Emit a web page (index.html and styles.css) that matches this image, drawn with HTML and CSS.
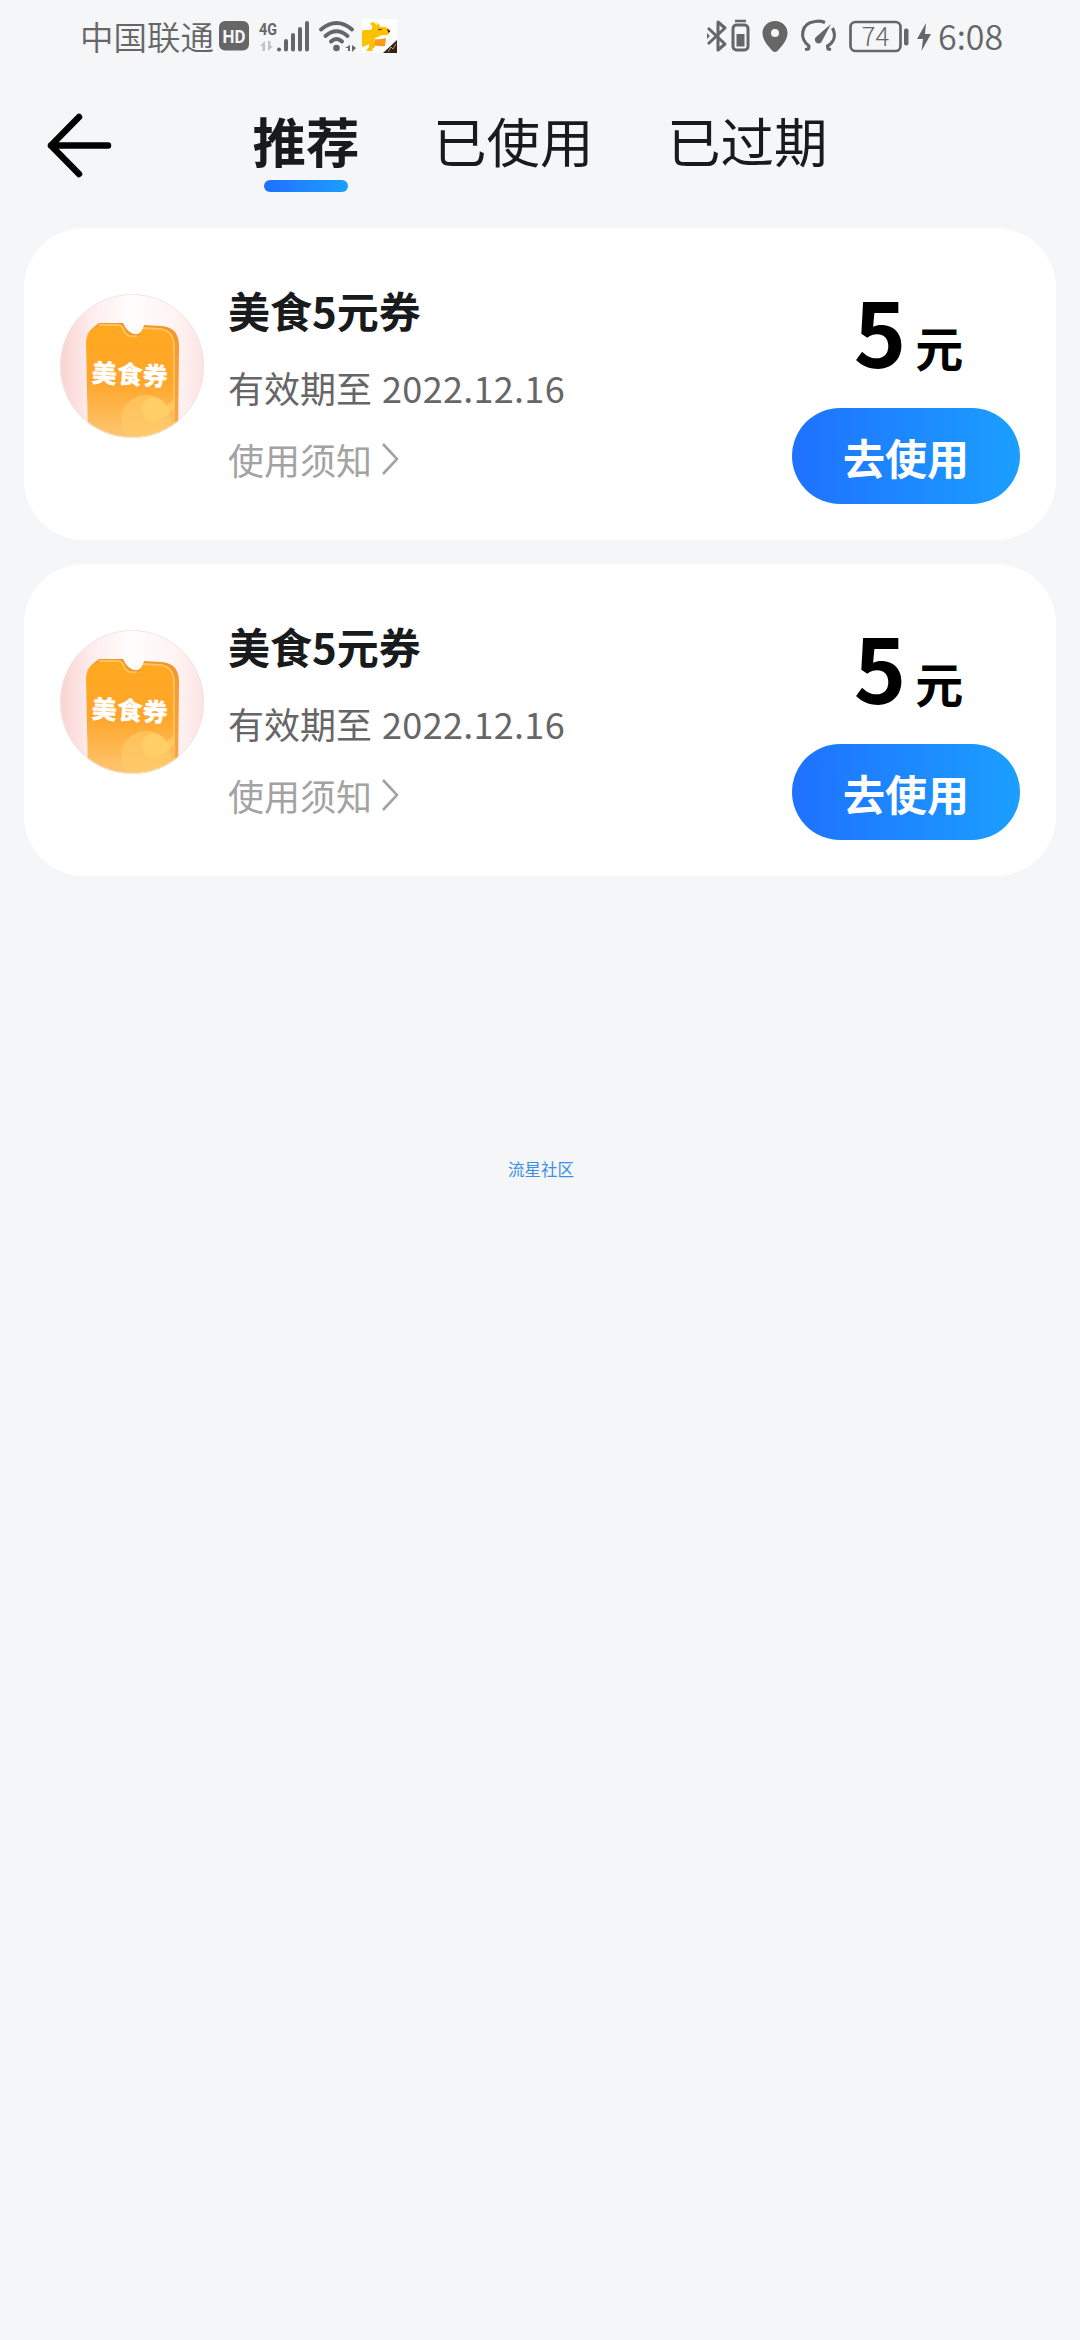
FILE: index.html
```html
<!DOCTYPE html>
<html lang="zh-CN">
<head>
<meta charset="utf-8">
<title>推荐</title>
<link rel="stylesheet" href="styles.css">
</head>
<body>
<svg class="defs" width="0" height="0" aria-hidden="true">
  <defs>
    <linearGradient id="halo" x1="0" y1="0" x2="1" y2="0">
      <stop offset="0" stop-color="#f8d3d1"/><stop offset=".22" stop-color="#fdeeed"/><stop offset=".5" stop-color="#fffdfc"/><stop offset=".82" stop-color="#fff3f2"/><stop offset="1" stop-color="#fbe3e2"/>
    </linearGradient>
    <linearGradient id="ticket" x1="0" y1="0" x2="0" y2="1">
      <stop offset="0" stop-color="#ffa820"/><stop offset=".5" stop-color="#ffa62b"/><stop offset="1" stop-color="#ffc673"/>
    </linearGradient>
    <linearGradient id="edge" x1="0" y1="0" x2="0" y2="1">
      <stop offset="0" stop-color="#f7952a"/><stop offset="1" stop-color="#fca548"/>
    </linearGradient>
    <clipPath id="round"><circle cx="72" cy="72" r="72"/></clipPath>
    <symbol id="coupon" viewBox="0 0 144 144">
      <g clip-path="url(#round)">
        <rect width="144" height="144" fill="url(#halo)"/>
        <path d="M28 45Q28 36 39 29L63 29Q68 40 76 40Q82 40 84 31L101 32Q119 33 119 52L118 144H75Z" fill="url(#edge)"/>
        <path d="M26 48Q27 32 42 32L58 32Q62 32 64 38Q68 44 77 43Q82 40 83 34L98 35Q113 36 113 53L114 144H28Z" fill="url(#ticket)"/>
        <path d="M39 31H58Q62 31 64 37Q68 44 77 42M83 34L99 35Q114 36 114 53V140" fill="none" stroke="#ffc55d" stroke-width="1.8"/>
        <path d="M64 27H84Q83 40 75 40Q68 39 64 27Z" fill="#fffdfc"/>
        <circle cx="86" cy="126" r="25" fill="#ffcd68" opacity=".65"/>
        <circle cx="94" cy="115" r="12" fill="#ffd36b" opacity=".7"/>
        <path d="M104 112Q113 109 114 103V114L104 124Z" fill="#ffd36b" opacity=".7"/>
        <text class="coupon-label" x="0" y="0" transform="translate(31 88) rotate(3)">美食券</text>
      </g>
      <circle cx="72" cy="72" r="71.5" fill="none" stroke="#f0e6e6"/>
    </symbol>
  </defs>
</svg>

<div class="status">
  <div class="status-left">
    <span class="carrier">中国联通</span>
    <svg class="hd" width="30" height="30" viewBox="0 0 30 30"><rect width="30" height="29.500" rx="6" fill="#666"/><text class="hd-text" x="15" y="21.500" text-anchor="middle" textLength="23" lengthAdjust="spacingAndGlyphs">HD</text></svg>
    <svg class="signal" width="51" height="32" viewBox="0 0 51 32">
      <text class="net" x="0" y="13.500" textLength="18" lengthAdjust="spacingAndGlyphs">4G</text>
      <path d="M6 20V30H3.500V25H1Z M9 20H11.500V25H14L9 30Z" fill="#c2c3c5"/>
      <g stroke="#666" stroke-width="4" stroke-linecap="round"><path d="M20 28.500v0M27 20v8.500M34 14v14.500M41 8v20.500M48 2v26.500"/></g>
    </svg>
    <svg class="wifi" width="38" height="32" viewBox="0 0 38 32">
      <g fill="none" stroke="#666" stroke-width="4" stroke-linecap="round"><path d="M2 8.500Q17.500-4.500 33 8.500M6.500 15Q17.500 5.500 28.500 15M12 20.500Q17.500 15.500 23 20.500"/></g>
      <circle cx="17.500" cy="27" r="3.300" fill="#666"/>
      <path d="M31 24V30H29V27H26Z M33 24L37 27L33 31Z" fill="#666"/>
    </svg>
    <svg class="app" width="35" height="34" viewBox="0 0 35 34">
      <rect width="35" height="34" fill="#fff"/>
      <path d="M0 12L2 11H8Q11 10 10 7L8 5L10 3Q13 3 15 7V4Q18 5 18 8Q24 7 28 11L27 15Q24 17 20 16Q16 18 13 19L12 22L14 25L12 29L10 30L11 32H4L7 28V25Q4 27 0 28Z" fill="#fdc100"/>
      <path d="M13 20Q18 21 24 19L23 27Q18 28 12 26Z" fill="#fb9b18"/>
      <path d="M25 10L28.500 12L26.500 14Z" fill="#2c2008"/><path d="M16 10.500h4" stroke="#6e5010" stroke-width="1.200"/>
      <path d="M35 21V34H21Z" fill="#32221a"/><path d="M26 33L29 28L31 30L34 25" stroke="#bd9176" fill="none"/>
    </svg>
  </div>
  <div class="status-right">
    <svg width="44" height="34" viewBox="0 0 44 34">
      <path d="M2 9L19 25L12 31V3L19 9L2 25" fill="none" stroke="#666" stroke-width="3" stroke-linejoin="round"/><path d="M1 14L4 17L1 20Z" fill="#666"/>
      <rect x="27" y="6" width="15" height="25" rx="3.500" fill="none" stroke="#666" stroke-width="3"/><path d="M29 2H40" stroke="#666" stroke-width="2.500"/><rect x="30.500" y="15" width="8" height="12.500" fill="#666"/>
    </svg>
    <svg class="pin" width="26" height="34" viewBox="0 0 26 34"><path fill-rule="evenodd" d="M13 2C6 2 .500 7 .500 14C.500 21 6 27 10.500 32Q13 34 15.500 32C20 27 25.500 21 25.500 14C25.500 7 20 2 13 2ZM13 10A4 4 0 1 1 13 18A4 4 0 1 1 13 10Z" fill="#666"/></svg>
    <svg class="gauge" width="37" height="34" viewBox="0 0 37 34">
      <path d="M5 30.500L8.500 30L9 27C-1 20 .500 4 15 2.500Q20 1.500 25 3.500M32.500 9C36 16 34.500 23 27.500 27L28 30L31 30.500" fill="none" stroke="#666" stroke-width="3.200" stroke-linejoin="round"/>
      <path d="M31 5L22 22A3.700 3.700 0 1 1 16 18Z" fill="#666"/>
    </svg>
    <svg class="battery" width="60" height="34" viewBox="0 0 60 34"><rect x="1.500" y="3" width="50" height="29" rx="5" fill="none" stroke="#666" stroke-width="2.700"/><rect x="55" y="9.500" width="4.500" height="17" rx="2" fill="#666"/><text class="level" x="26.500" y="27" text-anchor="middle">74</text></svg>
    <svg class="bolt" width="16" height="34" viewBox="0 0 16 34"><path d="M10 4L1 20H7L5.500 32L15 15H9Z" fill="#666"/></svg>
    <span class="clock">6:08</span>
  </div>
</div>

<nav class="header">
  <svg class="back" width="64" height="66" viewBox="0 0 64 66"><path d="M31 5L3 33.500L31 62M3 33.500H60" fill="none" stroke="#000" stroke-width="6.500" stroke-linecap="round" stroke-linejoin="round"/></svg>
  <div class="tabs">
    <span class="tab active">推荐</span>
    <span class="tab">已使用</span>
    <span class="tab">已过期</span>
  </div>
</nav>

<main class="list">
  <section class="card">
    <svg class="avatar" width="144" height="144"><use href="#coupon"/></svg>
    <div class="info">
      <div class="title">美食5元券</div>
      <div class="date">有效期至 <span class="digits">2022.12.16</span></div>
      <div class="notes">使用须知<svg width="18" height="32" viewBox="0 0 18 32"><path d="M2 1L16 16L2 31" fill="none" stroke="#a3a3a3" stroke-width="2.600"/></svg></div>
    </div>
    <div class="side">
      <div class="price"><span class="amount">5</span><span class="unit">元</span></div>
      <div class="button">去使用</div>
    </div>
  </section>
  <section class="card">
    <svg class="avatar" width="144" height="144"><use href="#coupon"/></svg>
    <div class="info">
      <div class="title">美食5元券</div>
      <div class="date">有效期至 <span class="digits">2022.12.16</span></div>
      <div class="notes">使用须知<svg width="18" height="32" viewBox="0 0 18 32"><path d="M2 1L16 16L2 31" fill="none" stroke="#a3a3a3" stroke-width="2.600"/></svg></div>
    </div>
    <div class="side">
      <div class="price"><span class="amount">5</span><span class="unit">元</span></div>
      <div class="button">去使用</div>
    </div>
  </section>
</main>
<footer class="community">流星社区</footer>
</body>
</html>
```

FILE: styles.css
```css
* { box-sizing: border-box; }
body {
  margin: 0;
  min-height: 2340px;
  background: #f4f6f8;
  font-family: "Noto Sans CJK SC", sans-serif;
  color: #181a1c;
}
svg { display: block; flex: none; overflow: visible; }
.defs { position: absolute; }

.status {
  display: flex;
  justify-content: space-between;
  height: 72px;
  padding: 0 76px 0 80px;
  color: #666;
}
.status-left, .status-right { display: flex; align-items: flex-start; }
.carrier { width: 134px; font-size: 33.5px; line-height: 71px; font-weight: 350; white-space: nowrap; }
.hd { margin: 21px 0 0 5px; }
.signal { margin: 21px 0 0 10px; }
.wifi { margin: 21px 0 0 9px; }
.app { margin: 19px 0 0 5px; }
.hd-text { font: 700 18px Roboto, sans-serif; fill: #f4f6f8; }
.net { font: 700 17px Roboto, sans-serif; fill: #666; }
.status-right > svg { margin-top: 19px; }
.status-right .pin { margin-left: 12px; }
.status-right .gauge { margin-left: 12px; }
.status-right .battery { margin-left: 12px; }
.status-right .bolt { margin-left: 7px; }
.level { font: 300 26px "Noto Sans CJK SC", sans-serif; fill: #666; }
.clock { width: 66px; margin-left: 6px; font-size: 34px; line-height: 71px; font-weight: 350; white-space: nowrap; }

.header { display: flex; height: 156px; padding-left: 48px; }
.back { margin-top: 40px; }
.tabs { display: flex; gap: 73.5px; margin-left: 140.5px; padding-top: 33px; }
.tab {
  display: flex;
  flex-direction: column;
  align-items: center;
  height: 87px;
  font-size: 53.5px;
  line-height: 70px;
  white-space: nowrap;
}
.active { font-weight: 700; }
.active::after {
  content: "";
  width: 84px;
  height: 12px;
  margin-top: 5px;
  border-radius: 6px;
  background: linear-gradient(90deg, #1f71ff, #1b9fff);
}

.list { display: flex; flex-direction: column; gap: 24px; padding: 0 24px; }
.card { display: flex; height: 312px; padding: 0 36px; border-radius: 60px; background: #fff; }
.avatar { margin-top: 66px; }
.coupon-label { font: 900 25.5px "Noto Sans CJK SC", sans-serif; fill: #fff; }
.info { flex: 1; margin-left: 24px; padding-top: 52px; }
.title { font-size: 42px; line-height: 60px; font-weight: 700; }
.date { margin-top: 20px; font-size: 36px; line-height: 54px; color: #666; }
.digits { margin-left: 2px; letter-spacing: 0.3px; }
.notes { display: flex; align-items: center; gap: 9px; margin-top: 18px; font-size: 36px; line-height: 54px; color: #a3a3a3; }
.side { width: 228px; padding-top: 51px; }
.price { display: flex; align-items: flex-start; justify-content: center; gap: 9px; height: 129px; padding-left: 5px; color: #000; font-weight: 700; }
.amount { font-size: 89px; line-height: 102px; }
.unit { margin-top: 37px; font-size: 48px; line-height: 60px; }
.button {
  height: 96px;
  border-radius: 48px;
  background: linear-gradient(90deg, #1f71ff, #1b9fff);
  color: #fff;
  font-size: 42px;
  font-weight: 700;
  line-height: 98px;
  text-align: center;
}
.community { margin-top: 281px; padding-left: 2px; font-size: 16.5px; line-height: 24px; text-align: center; color: #3d8fe6; }
```
